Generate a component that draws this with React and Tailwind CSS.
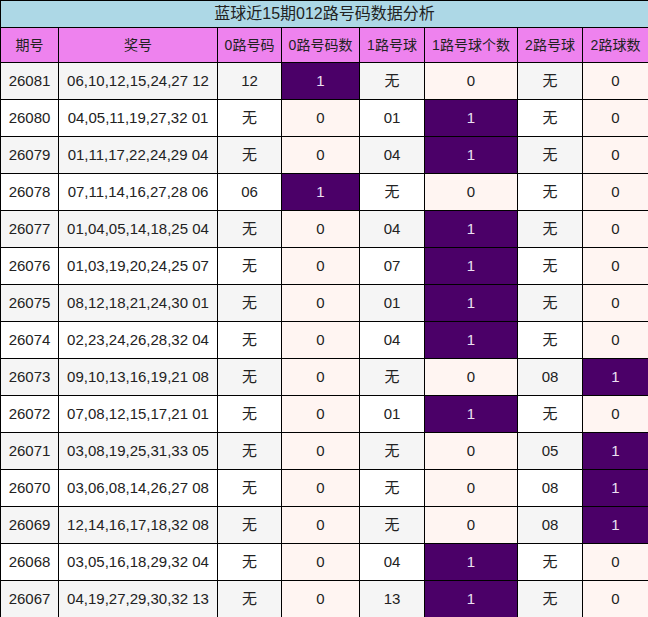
import React from "react";

const rows = [
  ["26081", "06,10,12,15,24,27 12", "12", 1, "无", 0, "无", 0],
  ["26080", "04,05,11,19,27,32 01", "无", 0, "01", 1, "无", 0],
  ["26079", "01,11,17,22,24,29 04", "无", 0, "04", 1, "无", 0],
  ["26078", "07,11,14,16,27,28 06", "06", 1, "无", 0, "无", 0],
  ["26077", "01,04,05,14,18,25 04", "无", 0, "04", 1, "无", 0],
  ["26076", "01,03,19,20,24,25 07", "无", 0, "07", 1, "无", 0],
  ["26075", "08,12,18,21,24,30 01", "无", 0, "01", 1, "无", 0],
  ["26074", "02,23,24,26,28,32 04", "无", 0, "04", 1, "无", 0],
  ["26073", "09,10,13,16,19,21 08", "无", 0, "无", 0, "08", 1],
  ["26072", "07,08,12,15,17,21 01", "无", 0, "01", 1, "无", 0],
  ["26071", "03,08,19,25,31,33 05", "无", 0, "无", 0, "05", 1],
  ["26070", "03,06,08,14,26,27 08", "无", 0, "无", 0, "08", 1],
  ["26069", "12,14,16,17,18,32 08", "无", 0, "无", 0, "08", 1],
  ["26068", "03,05,16,18,29,32 04", "无", 0, "04", 1, "无", 0],
  ["26067", "04,19,27,29,30,32 13", "无", 0, "13", 1, "无", 0],
];

const headers = ["期号", "奖号", "0路号码", "0路号码数", "1路号球", "1路号球个数", "2路号球", "2路球数"];
const widths = ["w-[58px]", "w-[159px]", "w-[64px]", "w-[78px]", "w-[65px]", "w-[93px]", "w-[65px]", "w-[66px]"];

function CountCell({ n }) {
  return n === 1 ? (
    <td className="border border-black bg-[#4b0068] p-0 text-[#ece0f2]">1</td>
  ) : (
    <td className="border border-black bg-[#fff5f2] p-0">0</td>
  );
}

export default function App() {
  return (
    <div
      className="w-[648px] bg-white text-[#222]"
      style={{ fontFamily: '"Liberation Sans", "Noto Sans CJK SC", sans-serif' }}
    >
      <table className="w-[648px] table-fixed border-collapse text-center">
        <colgroup>
          {widths.map((w, i) => (
            <col key={i} className={w} />
          ))}
        </colgroup>
        <thead>
          <tr className="h-[27px]">
            <th colSpan={8} className="border border-black bg-[#add8e6] p-0 text-[16px] font-normal leading-none">
              蓝球近15期012路号码数据分析
            </th>
          </tr>
          <tr className="h-[35px]">
            {headers.map((h) => (
              <th key={h} className="border border-black bg-[#ee82ee] p-0 text-[14px] font-normal">
                {h}
              </th>
            ))}
          </tr>
        </thead>
        <tbody className="text-[15px]">
          {rows.map((r, i) => {
            const bg = i % 2 === 0 ? "bg-[#f5f5f5]" : "bg-white";
            return (
              <tr key={r[0]} className="h-[37px]">
                <td className={`border border-black p-0 ${bg}`}>{r[0]}</td>
                <td className={`border border-black p-0 ${bg}`}>{r[1]}</td>
                <td className={`border border-black p-0 ${bg}`}>{r[2]}</td>
                <CountCell n={r[3]} />
                <td className={`border border-black p-0 ${bg}`}>{r[4]}</td>
                <CountCell n={r[5]} />
                <td className={`border border-black p-0 ${bg}`}>{r[6]}</td>
                <CountCell n={r[7]} />
              </tr>
            );
          })}
        </tbody>
      </table>
    </div>
  );
}
